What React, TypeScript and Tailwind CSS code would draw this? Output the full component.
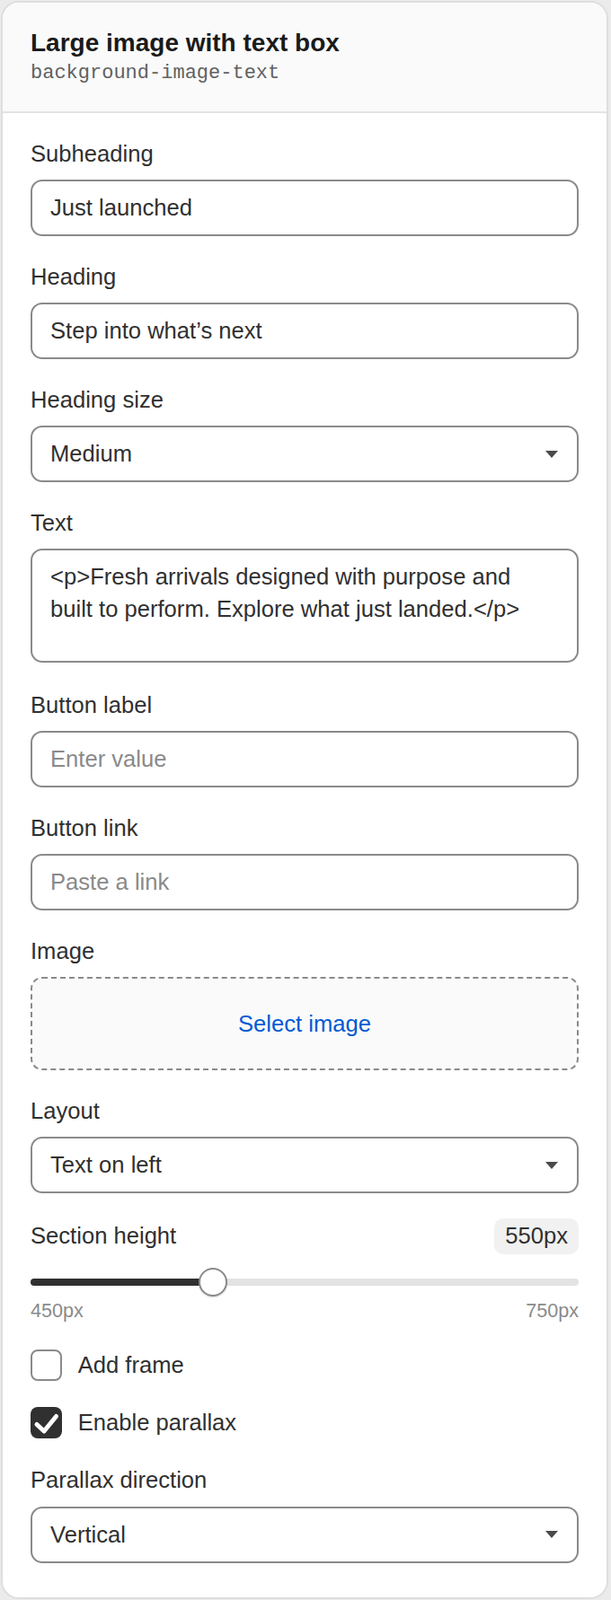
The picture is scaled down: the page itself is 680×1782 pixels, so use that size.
import React from 'react';

const labelCls = 'block text-[25.6px] leading-[38.4px] text-[#303030]';
const boxCls =
  'w-full rounded-[13px] border-2 border-[#8a8a8a] bg-white px-[20px] text-[25.6px] text-[#303030] outline-none';

function Field({ label, children, className = '' }: { label: string; children: React.ReactNode; className?: string }) {
  return (
    <div className={className}>
      <label className={labelCls}>{label}</label>
      <div className="mt-[10px]">{children}</div>
    </div>
  );
}

function TextInput({ value, placeholder }: { value?: string; placeholder?: string }) {
  return (
    <input
      readOnly
      defaultValue={value}
      placeholder={placeholder}
      className={`${boxCls} block h-[63px] placeholder:text-[#8a8a8a]`}
    />
  );
}

function SelectBox({ value }: { value: string }) {
  return (
    <div className={`${boxCls} flex h-[63px] items-center justify-between pr-[21px]`}>
      <span>{value}</span>
      <svg width="14" height="8" viewBox="0 0 14 8">
        <path d="M0 0 L14 0 L7 8 Z" fill="#4a4a4a" />
      </svg>
    </div>
  );
}

function CheckboxRow({ label, checked }: { label: string; checked?: boolean }) {
  return (
    <div className="flex h-[38.4px] items-center gap-[17.5px]">
      {checked ? (
        <div className="flex h-[35.2px] w-[35.2px] items-center justify-center rounded-[8px] bg-[#303030]">
          <svg width="35" height="35" viewBox="0 0 35 35">
            <path
              d="M7 19.5 L15 27 L28.5 10.5"
              fill="none"
              stroke="#ffffff"
              strokeWidth="5"
              strokeLinecap="round"
              strokeLinejoin="round"
            />
          </svg>
        </div>
      ) : (
        <div className="h-[35.2px] w-[35.2px] rounded-[8px] border-2 border-[#8a8a8a] bg-white" />
      )}
      <span className="text-[25.6px] leading-[38.4px] text-[#303030]">{label}</span>
    </div>
  );
}

export default function App() {
  const min = 450;
  const max = 750;
  const value = 550;
  const pct = ((value - min) / (max - min)) * 100;

  return (
    <div className="min-h-screen bg-[#ebebeb] pl-px pt-px font-['Liberation_Sans',Arial,sans-serif]">
      <div className="w-[676px] overflow-hidden rounded-[20px] border-2 border-[#dedede] bg-white">
        <div className="border-b-2 border-[#e3e3e3] bg-[#fafafa] px-[31px] pt-[27px] pb-[27px]">
          <h2 className="text-[28px] leading-[36px] font-bold text-[#1a1a1a]">Large image with text box</h2>
          <p className="mt-px font-['Liberation_Mono',monospace] text-[22px] leading-[30px] text-[#616161]">
            background-image-text
          </p>
        </div>

        <div className="flex flex-col gap-[25.6px] px-[31px] pt-[25.6px] pb-[38px]">
          <Field label="Subheading">
            <TextInput value="Just launched" />
          </Field>
          <Field label="Heading">
            <TextInput value="Step into what’s next" />
          </Field>
          <Field label="Heading size">
            <SelectBox value="Medium" />
          </Field>
          <Field label="Text">
            <textarea
              readOnly
              defaultValue="<p>Fresh arrivals designed with purpose and built to perform. Explore what just landed.</p>"
              className={`${boxCls} block h-[127px] resize-none pt-[11px] pr-[44px] leading-[36px]`}
            />
          </Field>
          <Field label="Button label" className="mt-[2px]">
            <TextInput placeholder="Enter value" />
          </Field>
          <Field label="Button link">
            <TextInput placeholder="Paste a link" />
          </Field>
          <Field label="Image">
            <div className="flex h-[104px] items-center justify-center rounded-[13px] border-2 border-dashed border-[#8a8a8a] bg-[#fafafa]">
              <span className="text-[25.6px] text-[#005bd3]">Select image</span>
            </div>
          </Field>
          <Field label="Layout">
            <SelectBox value="Text on left" />
          </Field>

          <div className="mt-[2px]">
            <div className="flex h-[40px] items-center justify-between">
              <span className={labelCls}>Section height</span>
              <span className="flex h-[40px] items-center rounded-[10px] bg-[#f1f1f1] px-[12px] text-[25.6px] text-[#303030]">
                {value}px
              </span>
            </div>
            <div className="relative mt-[15px] flex h-[32px] items-center">
              <div className="h-[8px] w-full rounded-full bg-[#e3e3e3]">
                <div className="h-full rounded-full bg-[#303030]" style={{ width: `${pct}%` }} />
              </div>
              <div
                className="absolute top-0 h-[32px] w-[32px] -translate-x-1/2 rounded-full border-2 border-[#8a8a8a] bg-white shadow-[0_1px_2px_rgba(0,0,0,0.15)]"
                style={{ left: `${pct}%` }}
              />
            </div>
            <div className="flex justify-between text-[21.6px] leading-[32px] text-[#8a8a8a]">
              <span>{min}px</span>
              <span>{max}px</span>
            </div>
          </div>

          <CheckboxRow label="Add frame" />
          <CheckboxRow label="Enable parallax" checked />

          <Field label="Parallax direction">
            <SelectBox value="Vertical" />
          </Field>
        </div>
      </div>
    </div>
  );
}
